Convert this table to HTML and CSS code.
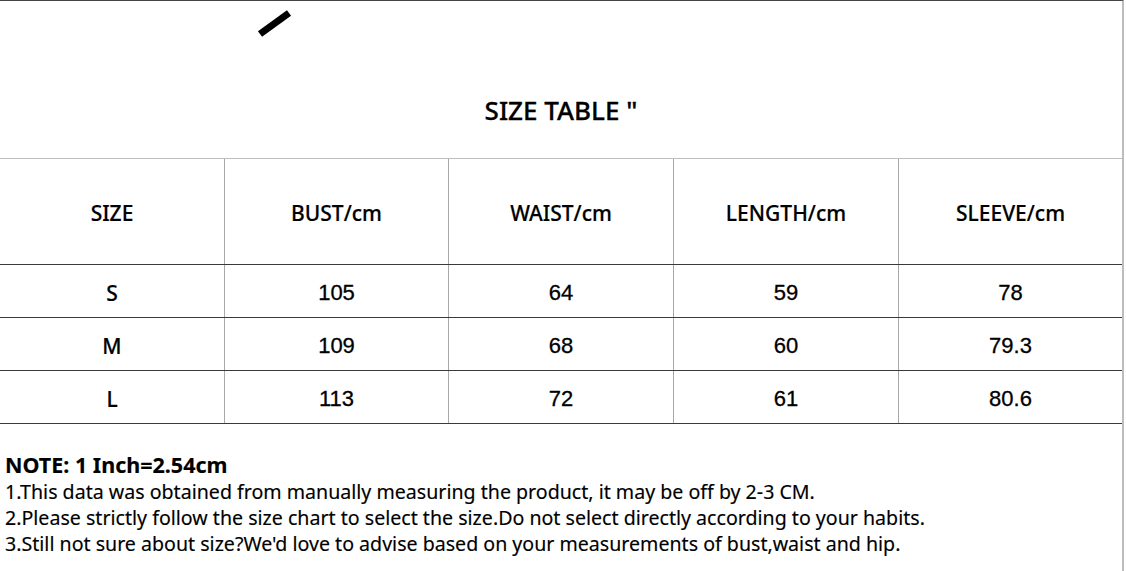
FILE: index.html
```html
<!DOCTYPE html>
<html>
<head>
<meta charset="utf-8">
<link rel="stylesheet" href="styles.css">
</head>
<body>
<div class="sheet">
  <svg class="mark" width="40" height="30" viewBox="0 0 40 30"><line x1="3" y1="26" x2="32" y2="5" stroke="#000" stroke-width="7"/></svg>
  <div class="title">SIZE TABLE "</div>
  <div class="grid">
    <div class="row head">
      <div class="cell">SIZE</div>
      <div class="cell">BUST/cm</div>
      <div class="cell">WAIST/cm</div>
      <div class="cell">LENGTH/cm</div>
      <div class="cell">SLEEVE/cm</div>
    </div>
    <div class="row">
      <div class="cell sz">S</div>
      <div class="cell">105</div>
      <div class="cell">64</div>
      <div class="cell">59</div>
      <div class="cell">78</div>
    </div>
    <div class="row">
      <div class="cell sz">M</div>
      <div class="cell">109</div>
      <div class="cell">68</div>
      <div class="cell">60</div>
      <div class="cell">79.3</div>
    </div>
    <div class="row">
      <div class="cell sz">L</div>
      <div class="cell">113</div>
      <div class="cell">72</div>
      <div class="cell">61</div>
      <div class="cell">80.6</div>
    </div>
  </div>
  <div class="notes">
    <div class="note-title">NOTE: 1 Inch=2.54cm</div>
    <div>1.This data was obtained from manually measuring the product, it may be off by 2-3 CM.</div>
    <div>2.Please strictly follow the size chart to select the size.Do not select directly according to your habits.</div>
    <div>3.Still not sure about size?We'd love to advise based on your measurements of bust,waist and hip.</div>
  </div>
</div>
</body>
</html>
```
FILE: styles.css
```css
html, body {
  margin: 0;
  padding: 0;
  background: #fff;
}
.sheet {
  position: relative;
  width: 1122px;
  height: 570px;
  border-top: 1px solid #444;
  border-right: 2px solid #bdbdbd;
  color: #000;
  font-family: "Noto Sans", "Open Sans", sans-serif;
}
.mark {
  position: absolute;
  left: 257px;
  top: 7px;
}
.title {
  height: 157px;
  box-sizing: border-box;
  padding-top: 93px;
  text-align: center;
  font-size: 26px;
  font-weight: 500;
  line-height: 32px;
  -webkit-text-stroke: 0.3px #000;
}
.grid {
  border-top: 1px solid #bdbdbd;
}
.row {
  display: grid;
  grid-template-columns: 225px 224px 225px 225px 1fr;
  height: 52px;
  border-bottom: 1px solid #3a3a3a;
}
.row.head {
  height: 105px;
}
.cell {
  display: flex;
  align-items: center;
  justify-content: center;
  padding-top: 3px;
  border-right: 1px solid #a8a8a8;
  font-family: "Liberation Sans", Arial, sans-serif;
  font-size: 22px;
  -webkit-text-stroke: 0.3px #000;
}
.cell:last-child {
  border-right: none;
}
.head .cell, .cell.sz {
  font-family: "Noto Sans", "Open Sans", sans-serif;
  font-size: 21px;
  font-weight: 500;
  -webkit-text-stroke: 0.2px #000;
}
.notes {
  padding: 28px 0 0 5px;
  font-size: 19.6px;
  line-height: 26px;
  -webkit-text-stroke: 0.15px #000;
}
.note-title {
  font-weight: bold;
  font-size: 21.5px;
  margin-bottom: 1px;
}
```
